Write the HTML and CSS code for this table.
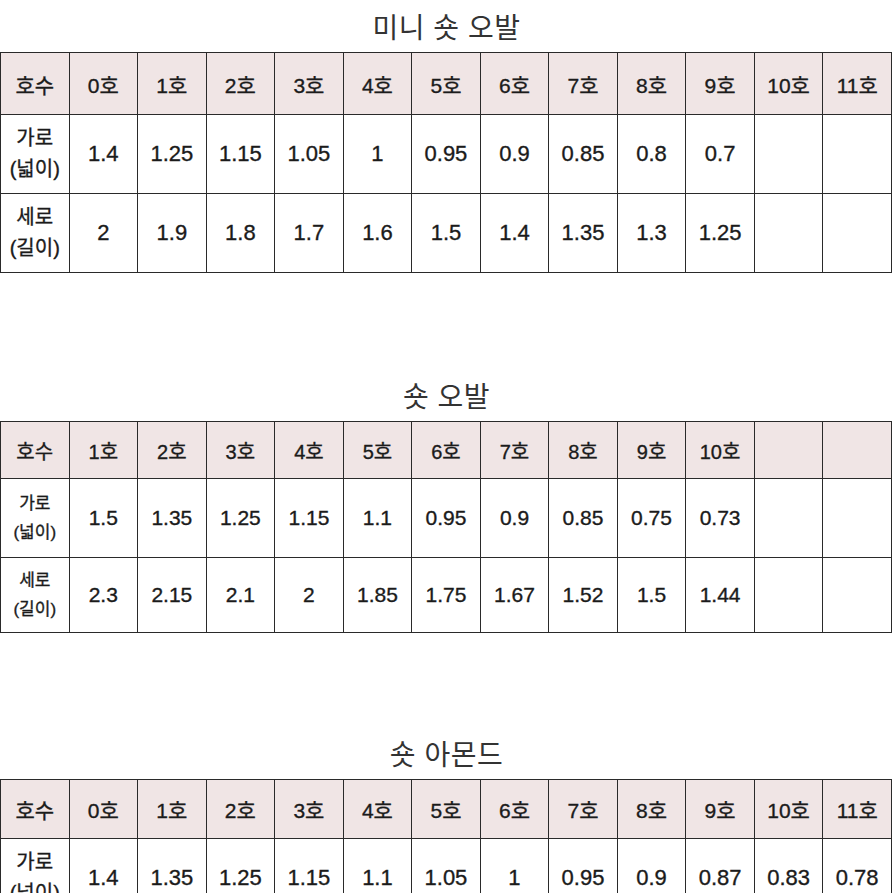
FILE: index.html
```html
<!DOCTYPE html>
<html lang="ko">
<head>
<meta charset="utf-8">
<title>사이즈표</title>
<link rel="stylesheet" href="styles.css">
</head>
<body>
<section class="block block-1">
  <h2 class="title">미니 숏 오발</h2>
  <table class="size-table t1">
    <tr class="head">
      <td>호수</td><td>0호</td><td>1호</td><td>2호</td><td>3호</td><td>4호</td><td>5호</td><td>6호</td><td>7호</td><td>8호</td><td>9호</td><td>10호</td><td>11호</td>
    </tr>
    <tr class="row">
      <td class="label">가로<br>(넓이)</td><td>1.4</td><td>1.25</td><td>1.15</td><td>1.05</td><td>1</td><td>0.95</td><td>0.9</td><td>0.85</td><td>0.8</td><td>0.7</td><td></td><td></td>
    </tr>
    <tr class="row">
      <td class="label">세로<br>(길이)</td><td>2</td><td>1.9</td><td>1.8</td><td>1.7</td><td>1.6</td><td>1.5</td><td>1.4</td><td>1.35</td><td>1.3</td><td>1.25</td><td></td><td></td>
    </tr>
  </table>
</section>

<section class="block block-2">
  <h2 class="title">숏 오발</h2>
  <table class="size-table t2">
    <tr class="head">
      <td>호수</td><td>1호</td><td>2호</td><td>3호</td><td>4호</td><td>5호</td><td>6호</td><td>7호</td><td>8호</td><td>9호</td><td>10호</td><td></td><td></td>
    </tr>
    <tr class="row row-a">
      <td class="label">가로<br>(넓이)</td><td>1.5</td><td>1.35</td><td>1.25</td><td>1.15</td><td>1.1</td><td>0.95</td><td>0.9</td><td>0.85</td><td>0.75</td><td>0.73</td><td></td><td></td>
    </tr>
    <tr class="row row-b">
      <td class="label">세로<br>(길이)</td><td>2.3</td><td>2.15</td><td>2.1</td><td>2</td><td>1.85</td><td>1.75</td><td>1.67</td><td>1.52</td><td>1.5</td><td>1.44</td><td></td><td></td>
    </tr>
  </table>
</section>

<section class="block block-3">
  <h2 class="title">숏 아몬드</h2>
  <table class="size-table t3">
    <tr class="head">
      <td>호수</td><td>0호</td><td>1호</td><td>2호</td><td>3호</td><td>4호</td><td>5호</td><td>6호</td><td>7호</td><td>8호</td><td>9호</td><td>10호</td><td>11호</td>
    </tr>
    <tr class="row">
      <td class="label">가로<br>(넓이)</td><td>1.4</td><td>1.35</td><td>1.25</td><td>1.15</td><td>1.1</td><td>1.05</td><td>1</td><td>0.95</td><td>0.9</td><td>0.87</td><td>0.83</td><td>0.78</td>
    </tr>
  </table>
</section>
</body>
</html>
```

FILE: styles.css
```css
html, body {
  margin: 0;
  padding: 0;
  background: #ffffff;
}

body {
  width: 893px;
  height: 893px;
  overflow: hidden;
  font-family: "Liberation Sans", "Noto Sans CJK KR", sans-serif;
  color: #1b1b1b;
}

.block {
  display: block;
}

.block-2 {
  margin-top: 97px;
}

.block-3 {
  margin-top: 95px;
}

.title {
  margin: 0;
  height: 52px;
  line-height: 52px;
  text-align: center;
  font-family: "Noto Sans CJK KR", sans-serif;
  font-size: 28px;
  font-weight: 400;
  color: #333333;
  letter-spacing: 0.5px;
}

.block-2 .title,
.block-3 .title {
  height: 51px;
  line-height: 50px;
}

.size-table {
  width: 892px;
  border-collapse: collapse;
  table-layout: fixed;
}

.size-table td {
  border: 1px solid #2a2a2a;
  padding: 0;
  text-align: center;
  vertical-align: middle;
  font-weight: 400;
  -webkit-text-stroke: 0.35px #1b1b1b;
}

.head td {
  background: #f0e5e5;
  font-size: 21px;
}

.row td {
  font-size: 22px;
  line-height: 26px;
  background: #ffffff;
}

.row td.label {
  font-size: 20px;
  line-height: 31px;
}

.t1 .head td { height: 61px; }
.t1 .row td { height: 78px; }

.t2 .head td { height: 56px; font-size: 20px; }
.t2 .row td { font-size: 21px; }
.t2 .row td.label { font-size: 17px; line-height: 29px; }
.t2 .row-a td { height: 78px; }
.t2 .row-b td { height: 74px; }

.t3 .head td { height: 58px; }
.t3 .row td { height: 78px; }
```
